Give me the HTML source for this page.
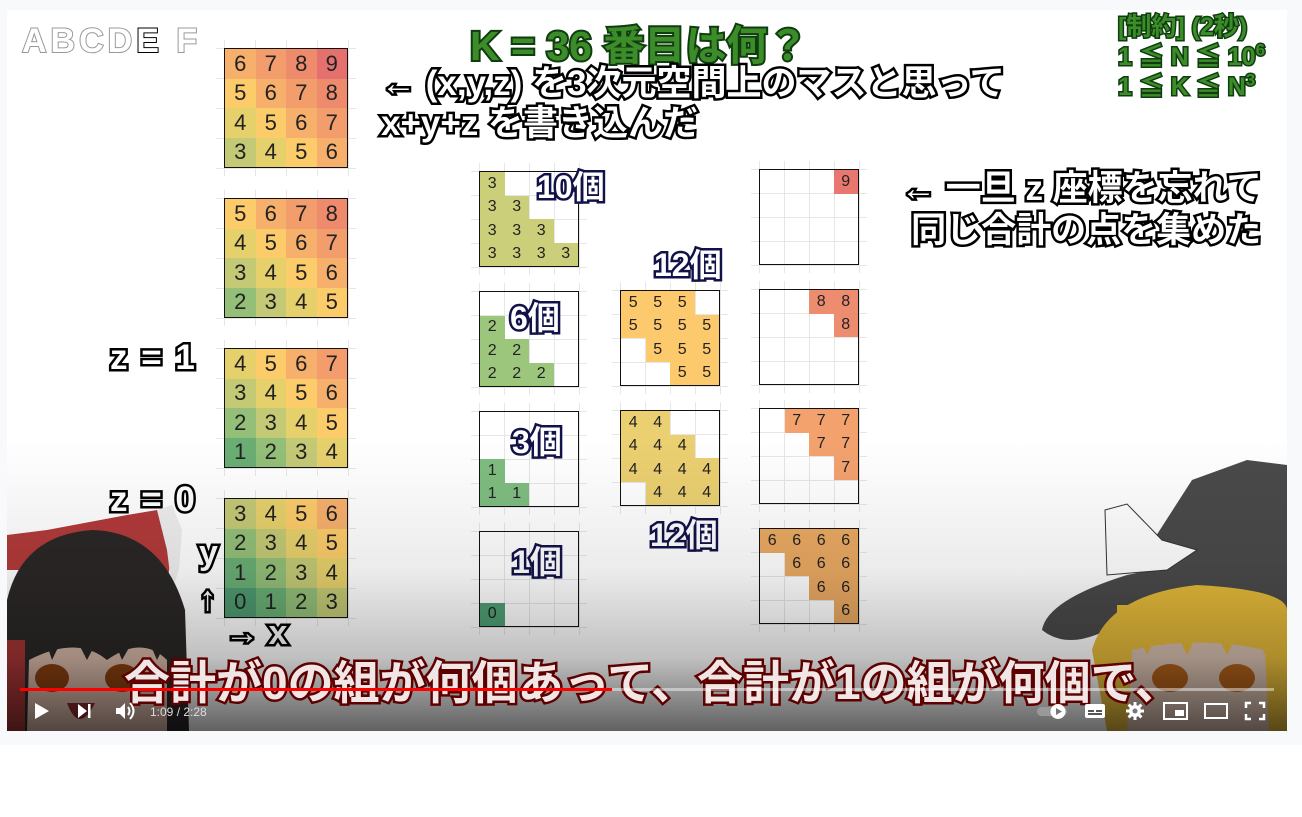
<!DOCTYPE html>
<html><head><meta charset="utf-8">
<style>
html,body{margin:0;padding:0;background:#fff;}
body{width:1302px;height:817px;position:relative;overflow:hidden;font-family:"Liberation Sans","Noto Sans CJK JP",sans-serif;}
#frame{position:absolute;left:0;top:0;width:1302px;height:745px;background:#f8f9fa;}
#video{position:absolute;left:7px;top:10px;width:1280px;height:721px;background:#fff;overflow:hidden;}
.abs{position:absolute;white-space:nowrap;}
.o{paint-order:stroke fill;-webkit-text-stroke:5px #000;color:#fff;font-weight:bold;}
.grid{position:absolute;border:1.5px solid #111;box-sizing:border-box;display:grid;}
.grid div{display:flex;align-items:center;justify-content:center;color:#222;}
.bg{position:absolute;background:#e6e6e6;}
</style></head><body>
<div id="frame"></div>
<div id="video">
  <div id="lines"></div>
  <div id="grids"></div>

  <div class="abs" style="left:15px;top:12px;font-size:34px;font-weight:bold;letter-spacing:4px;color:#fff;-webkit-text-stroke:2px #999;paint-order:stroke fill;">ABCD<span style="-webkit-text-stroke:2px #000;color:#fff;">E</span> F</div>

  <div class="abs" style="left:463px;top:2px;font-size:41px;font-weight:bold;color:#3d8c2a;-webkit-text-stroke:4px #0f3d0f;paint-order:stroke fill;">K = 36 番目は何？</div>
  <div class="abs" style="left:1111px;top:2px;font-size:25px;line-height:30px;font-weight:bold;color:#3d8c2a;-webkit-text-stroke:3px #0f3d0f;paint-order:stroke fill;">[制約] (2秒)<br>1 ≦ N ≦ 10<sup style="font-size:17px;line-height:0">6</sup><br>1 ≦ K ≦ N<sup style="font-size:17px;line-height:0">3</sup></div>

  <div class="abs o" style="left:374px;top:54px;font-size:35px;line-height:40px;">← (x,y,z) を3次元空間上のマスと思って<br>x+y+z を書き込んだ</div>
  <div class="abs o" style="left:894px;top:158px;font-size:35px;line-height:42px;text-align:center;">← 一旦 z 座標を忘れて<br>&nbsp;同じ合計の点を集めた</div>

  <div class="abs o" style="left:103px;top:328px;font-size:35px;letter-spacing:2px;">z = 1</div>
  <div class="abs o" style="left:103px;top:470px;font-size:35px;letter-spacing:2px;">z = 0</div>
  <div class="abs o" style="left:192px;top:524px;font-size:34px;">y</div>
  <div class="abs o" style="left:192px;top:570px;font-size:34px;">↑</div>
  <div class="abs o" style="left:218px;top:604px;font-size:34px;">→ x</div>

  <div class="abs o" style="left:530px;top:152px;font-size:32px;color:#fff;-webkit-text-stroke:5px #12124a;">10個</div>
  <div class="abs o" style="left:647px;top:230px;font-size:32px;-webkit-text-stroke:5px #12124a;">12個</div>
  <div class="abs o" style="left:503px;top:283px;font-size:32px;-webkit-text-stroke:5px #12124a;">6個</div>
  <div class="abs o" style="left:505px;top:407px;font-size:32px;-webkit-text-stroke:5px #12124a;">3個</div>
  <div class="abs o" style="left:505px;top:527px;font-size:32px;-webkit-text-stroke:5px #12124a;">1個</div>
  <div class="abs o" style="left:643px;top:500px;font-size:32px;-webkit-text-stroke:5px #12124a;">12個</div>

  <svg class="abs" style="left:0;top:0" width="1280" height="721">
    <!-- Reimu -->
    <path d="M0 525 L40 520 L120 505 L150 500 L165 540 L160 575 L100 560 L0 560Z" fill="#b23a3a"/>
    <path d="M150 500 L165 495 L175 520 L172 560 L165 580 L160 540Z" fill="#eee"/>
    <path d="M0 590 Q15 525 85 520 Q155 522 178 600 L182 721 L0 721Z" fill="#2b2727"/>
    <path d="M20 721 L22 650 Q70 625 100 650 Q135 625 160 650 L160 721Z" fill="#d8b8a8"/>
    <path d="M18 650 L35 620 L45 650 L62 615 L80 650 L100 612 L115 650 L135 615 L150 650 L165 620 L172 600 L15 600Z" fill="#2b2727"/>
    <ellipse cx="45" cy="668" rx="17" ry="14" fill="#8a4010"/>
    <ellipse cx="115" cy="668" rx="17" ry="14" fill="#8a4010"/>
    <path d="M60 693 Q72 725 88 693 Z" fill="#8a2a2a"/>
    <rect x="0" y="630" width="18" height="91" fill="#a53535"/>
    <!-- Marisa -->
    <path d="M1140 540 L1185 470 L1240 450 L1280 455 L1280 570 L1170 580Z" fill="#4a4a4a"/>
    <path d="M1035 620 Q1040 590 1120 565 Q1200 548 1280 560 L1280 610 Q1180 600 1100 620 Q1060 640 1035 620Z" fill="#4a4a4a"/>
    <path d="M1098 500 L1120 494 L1155 530 L1190 540 L1160 560 L1100 565Z" fill="#fff" stroke="#333" stroke-width="1"/>
    <path d="M1085 640 Q1100 585 1190 575 Q1280 580 1280 600 L1280 721 L1100 721Z" fill="#e6bb3a"/>
    <path d="M1120 721 L1125 640 Q1190 625 1258 640 L1262 721Z" fill="#d9c0b0"/>
    <path d="M1110 645 L1125 605 L1140 645 L1160 605 L1180 645 L1200 605 L1220 645 L1240 605 L1258 645 L1270 595 L1110 595Z" fill="#e6bb3a"/>
    <ellipse cx="1163" cy="668" rx="18" ry="14" fill="#b0601a"/>
    <ellipse cx="1230" cy="668" rx="18" ry="14" fill="#b0601a"/>
  </svg>

  <div class="abs" style="left:0;top:430px;width:1280px;height:291px;background:linear-gradient(to bottom,rgba(0,0,0,0) 0%,rgba(0,0,0,0.08) 45%,rgba(0,0,0,0.25) 75%,rgba(0,0,0,0.62) 100%);"></div>

  <div class="abs" style="left:117px;top:637px;font-size:46px;font-weight:bold;color:#f0e6e6;-webkit-text-stroke:5px #5e0000;paint-order:stroke fill;">合計が0の組が何個あって、合計が1の組が何個で、</div>

  <div class="abs" style="left:13px;top:678px;width:1254px;height:3px;background:rgba(255,255,255,0.45);"></div>
  <div class="abs" style="left:13px;top:678px;width:592px;height:3px;background:#f00;"></div>

  <svg class="abs" style="left:0;top:688px" width="1280" height="30" fill="#fff">
    <path d="M28 5 L42 13 L28 21Z"/>
    <path d="M71 6 L80 13 L71 20Z"/><rect x="81" y="6" width="2.5" height="14"/>
    <path d="M109 10 L113 10 L118 5 L118 21 L113 16 L109 16Z"/>
    <path d="M121 9 Q124 13 121 17" stroke="#fff" stroke-width="2" fill="none"/>
    <path d="M123 5 Q130 13 123 21" stroke="#fff" stroke-width="2" fill="none"/>
    <text x="143" y="18" font-size="12" fill="#ddd" font-family="Liberation Sans">1:09 / 2:28</text>
    <rect x="1030" y="9" width="30" height="9" rx="4.5" fill="#999"/>
    <circle cx="1051" cy="13.5" r="7.5" fill="#fff"/><path d="M1049 10 L1055 13.5 L1049 17Z" fill="#777"/>
    <rect x="1078" y="6" width="20" height="14" rx="2"/><rect x="1081" y="12" width="6" height="2" fill="#555"/><rect x="1089" y="12" width="6" height="2" fill="#555"/><rect x="1081" y="15" width="14" height="2" fill="#555"/>
    <g transform="translate(1128 13)"><circle r="6"/><g stroke="#fff" stroke-width="3"><path d="M0 -9 V9 M-9 0 H9 M-6.4 -6.4 L6.4 6.4 M-6.4 6.4 L6.4 -6.4"/></g><circle r="2.5" fill="#777"/></g>
    <rect x="1157" y="5" width="23" height="16" fill="none" stroke="#fff" stroke-width="2"/><rect x="1168" y="12" width="9" height="6"/>
    <rect x="1198" y="6" width="22" height="14" fill="none" stroke="#fff" stroke-width="2"/>
    <path d="M1239 10 V5 H1244 M1252 5 H1257 V10 M1257 16 V21 H1252 M1244 21 H1239 V16" stroke="#fff" stroke-width="2.5" fill="none"/>
  </svg>
</div>
<script>
var C1={0:'#4e9a70',1:'#6aae74',2:'#93bf78',3:'#c3c975',4:'#e6d06c',5:'#fccb6a',6:'#f6b06c',7:'#f39c6c',8:'#ee8b6c',9:'#e5716e'};
var C2={0:'#4f9f74',1:'#7fbd80',2:'#9cc67c',3:'#cccf7a',4:'#ebd071',5:'#fdc96d',6:'#eaa962',7:'#f3a26e',8:'#ee8c70',9:'#e8776f'};
var G=document.getElementById('grids'),L=document.getElementById('lines');
function grid(x,y,cw,ch,rows,cols,fs){
  x-=7;y-=10;
  for(var i=0;i<=4;i++){
    var v=document.createElement('div');v.className='bg';v.style.cssText+='left:'+(x+i*cw)+'px;top:'+(y-8)+'px;width:1px;height:'+(ch*4+16)+'px';L.appendChild(v);
    var h=document.createElement('div');h.className='bg';h.style.cssText+='left:'+(x-8)+'px;top:'+(y+i*ch)+'px;width:'+(cw*4+16)+'px;height:1px';L.appendChild(h);
  }
  var g=document.createElement('div');g.className='grid';
  g.style.cssText+='left:'+x+'px;top:'+y+'px;width:'+(cw*4)+'px;height:'+(ch*4)+'px;grid-template-columns:repeat(4,1fr);grid-template-rows:repeat(4,1fr);font-size:'+fs+'px;';
  rows.forEach(function(r){for(var j=0;j<4;j++){var c=document.createElement('div');var ch_=r[j];if(ch_!=='.'){c.textContent=ch_;c.style.background=cols[ch_];}g.appendChild(c);}});
  G.appendChild(g);
}
grid(224,48,31,30,['6789','5678','4567','3456'],C1,22);
grid(224,198,31,30,['5678','4567','3456','2345'],C1,22);
grid(224,348,31,30,['4567','3456','2345','1234'],C1,22);
grid(224,498,31,30,['3456','2345','1234','0123'],C1,22);
grid(479,171,25,24,['3...','33..','333.','3333'],C2,16);
grid(479,291,25,24,['....','2...','22..','222.'],C2,16);
grid(479,411,25,24,['....','....','1...','11..'],C2,16);
grid(479,531,25,24,['....','....','....','0...'],C2,16);
grid(620,290,25,24,['555.','5555','.555','..55'],C2,16);
grid(620,410,25,24,['44..','444.','4444','.444'],C2,16);
grid(759,169,25,24,['...9','....','....','....'],C2,16);
grid(759,289,25,24,['..88','...8','....','....'],C2,16);
grid(759,408,25,24,['.777','..77','...7','....'],C2,16);
grid(759,528,25,24,['6666','.666','..66','...6'],C2,16);
</script>
</body></html>
